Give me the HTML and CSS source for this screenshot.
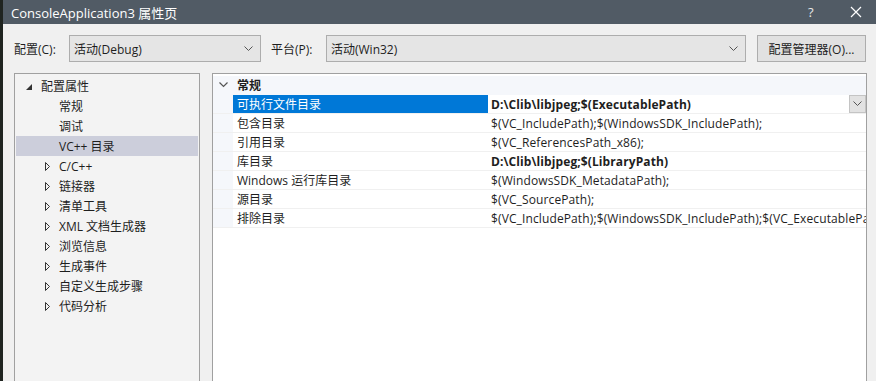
FILE: index.html
```html
<!DOCTYPE html>
<html lang="zh">
<head>
<meta charset="utf-8">
<link rel="stylesheet" href="styles.css">
</head>
<body>
<div class="screen">
  <div class="edge"></div>
  <div class="window">
    <div class="titlebar">
      <span class="title">ConsoleApplication3 属性页</span>
      <span class="tb-help">?</span>
      <span class="tb-close"><svg width="12" height="12" viewBox="0 0 12 12"><path d="M1 1 L11 11 M11 1 L1 11" stroke="#fff" stroke-width="1.2" fill="none"/></svg></span>
    </div>
    <div class="toolbar">
      <span class="lbl">配置(C):</span>
      <div class="combo combo-config"><span>活动(Debug)</span><svg class="chev" width="9" height="6" viewBox="0 0 9 6"><path d="M0.5 0.5 L4.5 4.5 L8.5 0.5" stroke="#555" stroke-width="1" fill="none"/></svg></div>
      <span class="lbl lbl-plat">平台(P):</span>
      <div class="combo combo-plat"><span>活动(Win32)</span><svg class="chev" width="9" height="6" viewBox="0 0 9 6"><path d="M0.5 0.5 L4.5 4.5 L8.5 0.5" stroke="#555" stroke-width="1" fill="none"/></svg></div>
      <button class="btn">配置管理器(O)...</button>
    </div>
    <div class="main">
      <div class="tree">
        <div class="node lvl0"><svg class="tri" width="6" height="6" viewBox="0 0 6 6"><path d="M6 0 L6 6 L0 6 Z" fill="#333"/></svg><span>配置属性</span></div>
        <div class="node lvl1 leaf"><span>常规</span></div>
        <div class="node lvl1 leaf"><span>调试</span></div>
        <div class="node lvl1 leaf sel"><span>VC++ 目录</span></div>
        <div class="node lvl1"><svg class="tri" width="5" height="9" viewBox="0 0 5 9"><path d="M0.5 0.5 L4.5 4.5 L0.5 8.5 Z" stroke="#333" stroke-width="1" fill="none"/></svg><span>C/C++</span></div>
        <div class="node lvl1"><svg class="tri" width="5" height="9" viewBox="0 0 5 9"><path d="M0.5 0.5 L4.5 4.5 L0.5 8.5 Z" stroke="#333" stroke-width="1" fill="none"/></svg><span>链接器</span></div>
        <div class="node lvl1"><svg class="tri" width="5" height="9" viewBox="0 0 5 9"><path d="M0.5 0.5 L4.5 4.5 L0.5 8.5 Z" stroke="#333" stroke-width="1" fill="none"/></svg><span>清单工具</span></div>
        <div class="node lvl1"><svg class="tri" width="5" height="9" viewBox="0 0 5 9"><path d="M0.5 0.5 L4.5 4.5 L0.5 8.5 Z" stroke="#333" stroke-width="1" fill="none"/></svg><span>XML 文档生成器</span></div>
        <div class="node lvl1"><svg class="tri" width="5" height="9" viewBox="0 0 5 9"><path d="M0.5 0.5 L4.5 4.5 L0.5 8.5 Z" stroke="#333" stroke-width="1" fill="none"/></svg><span>浏览信息</span></div>
        <div class="node lvl1"><svg class="tri" width="5" height="9" viewBox="0 0 5 9"><path d="M0.5 0.5 L4.5 4.5 L0.5 8.5 Z" stroke="#333" stroke-width="1" fill="none"/></svg><span>生成事件</span></div>
        <div class="node lvl1"><svg class="tri" width="5" height="9" viewBox="0 0 5 9"><path d="M0.5 0.5 L4.5 4.5 L0.5 8.5 Z" stroke="#333" stroke-width="1" fill="none"/></svg><span>自定义生成步骤</span></div>
        <div class="node lvl1"><svg class="tri" width="5" height="9" viewBox="0 0 5 9"><path d="M0.5 0.5 L4.5 4.5 L0.5 8.5 Z" stroke="#333" stroke-width="1" fill="none"/></svg><span>代码分析</span></div>
      </div>
      <div class="grid">
        <div class="row header">
          <div class="gutter"><svg width="9" height="6" viewBox="0 0 9 6"><path d="M0.5 0.5 L4.5 4.5 L8.5 0.5" stroke="#555" stroke-width="1.2" fill="none"/></svg></div>
          <div class="name">常规</div>
          <div class="val"></div>
        </div>
        <div class="row selected">
          <div class="gutter"></div>
          <div class="name">可执行文件目录</div>
          <div class="val bold">D:\Clib\libjpeg;$(ExecutablePath)<span class="ddbtn"><svg width="9" height="6" viewBox="0 0 9 6"><path d="M0.5 0.5 L4.5 4.5 L8.5 0.5" stroke="#555" stroke-width="1" fill="none"/></svg></span></div>
        </div>
        <div class="row">
          <div class="gutter"></div>
          <div class="name">包含目录</div>
          <div class="val">$(VC_IncludePath);$(WindowsSDK_IncludePath);</div>
        </div>
        <div class="row">
          <div class="gutter"></div>
          <div class="name">引用目录</div>
          <div class="val">$(VC_ReferencesPath_x86);</div>
        </div>
        <div class="row">
          <div class="gutter"></div>
          <div class="name">库目录</div>
          <div class="val bold">D:\Clib\libjpeg;$(LibraryPath)</div>
        </div>
        <div class="row">
          <div class="gutter"></div>
          <div class="name">Windows 运行库目录</div>
          <div class="val">$(WindowsSDK_MetadataPath);</div>
        </div>
        <div class="row">
          <div class="gutter"></div>
          <div class="name">源目录</div>
          <div class="val">$(VC_SourcePath);</div>
        </div>
        <div class="row">
          <div class="gutter"></div>
          <div class="name">排除目录</div>
          <div class="val">$(VC_IncludePath);$(WindowsSDK_IncludePath);$(VC_ExecutablePath_x86);$(VC_LibraryPath_x86);</div>
        </div>
      </div>
    </div>
  </div>
</div>
</body>
</html>
```
FILE: styles.css
```css
* { box-sizing: border-box; }
html, body { margin: 0; padding: 0; }
body {
  width: 876px;
  height: 381px;
  overflow: hidden;
  font-family: "Open Sans", "Noto Sans CJK SC", sans-serif;
  font-size: 12px;
  color: #1e1e1e;
  background: #f0f0f0;
}
.screen { display: flex; height: 381px; }
.edge { width: 3px; background: #1f2420; flex: none; }
.window { flex: 1; display: flex; flex-direction: column; background: #f0f0f0; min-width: 0; }
.titlebar {
  height: 24px;
  background: #515b65;
  color: #fff;
  display: flex;
  align-items: center;
  padding-left: 8px;
  flex: none;
}
.title { font-size: 13px; flex: 1; }
.tb-help { width: 42px; font-size: 13px; color: #e8e8e8; }
.tb-close { width: 26px; display: flex; align-items: center; }
.toolbar {
  height: 49px;
  display: flex;
  align-items: center;
  padding: 0 0 0 11px;
  flex: none;
}
.lbl { width: 55px; flex: none; }
.lbl-plat { margin-left: 10px; }
.combo {
  height: 27px;
  border: 1px solid #adadad;
  background: #e5e5e5;
  display: flex;
  align-items: center;
  padding-left: 4px;
  position: relative;
  flex: none;
}
.combo span { flex: 1; }
.combo .chev { margin-right: 7px; }
.combo-config { width: 192px; }
.combo-plat { width: 420px; }
.btn {
  margin-left: 11px;
  width: 109px;
  height: 27px;
  border: 1px solid #adadad;
  background: #e1e1e1;
  font: inherit;
  color: #1e1e1e;
  padding: 0;
}
.main { flex: 1; display: flex; padding-left: 11px; min-height: 0; }
.tree {
  width: 186px;
  border: 1px solid #a0a0a0;
  border-bottom: none;
  background: #f3f3f3;
  padding-top: 2px;
  flex: none;
}
.node { height: 20px; display: flex; align-items: center; }
.node .tri { flex: none; }
.lvl0 { padding-left: 11px; }
.lvl0 .tri { margin-right: 9px; margin-top: 2px; }
.lvl1 { padding-left: 30px; }
.lvl1 .tri { margin-right: 9px; }
.lvl1.leaf { padding-left: 44px; }
.node.sel { background: #cccedb; margin: 0 1px; padding-left: 43px; }
.grid {
  margin-left: 12px;
  width: 655px;
  border: 1px solid #a0a0a0;
  border-bottom: none;
  background: #fff;
  padding-top: 2px;
  flex: none;
  overflow: hidden;
}
.row { height: 19px; display: flex; border-bottom: 1px solid #f0f0f0; }
.gutter { width: 20px; flex: none; background: #f5f7fb; display: flex; align-items: center; justify-content: center; }
.name { width: 255px; flex: none; padding-left: 4px; display: flex; align-items: center; white-space: nowrap; }
.val { flex: 1; padding-left: 3px; display: flex; align-items: center; white-space: nowrap; overflow: hidden; position: relative; min-width: 0; letter-spacing: 0.12px; }
.val.bold { font-weight: bold; letter-spacing: 0.1px; }
.header { border-bottom-color: #f5f7fb; }
.header .name { font-weight: bold; background: #f5f7fb; }
.header .val { background: #f5f7fb; }
.selected .name { background: #0078d7; color: #fff; }
.ddbtn {
  position: absolute;
  right: 0;
  top: 0;
  width: 17px;
  height: 18px;
  background: #e2e2e2;
  border: 1px solid #c4c4c4;
  display: flex;
  align-items: center;
  justify-content: center;
}
```
